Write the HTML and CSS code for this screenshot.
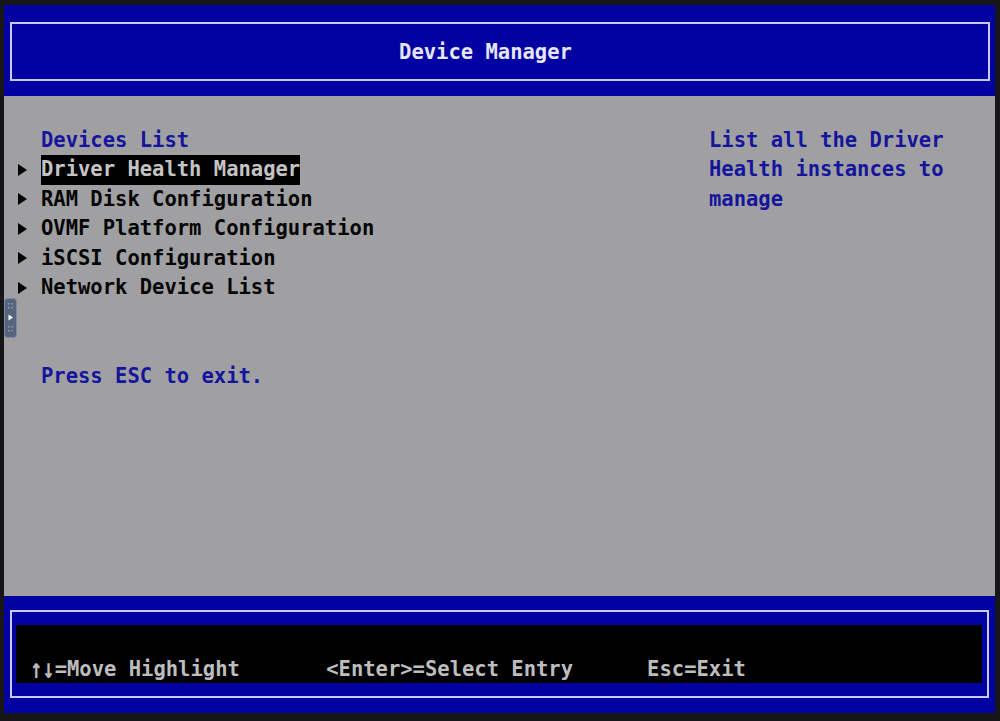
FILE: index.html
```html
<!DOCTYPE html>
<html lang="en">
<head>
    <meta charset="UTF-8">
    <meta name="viewport" content="width=device-width, initial-scale=1.0">
    <title>Device Manager</title>
    <link rel="stylesheet" href="styles.css">
</head>
<body>
    <div class="screen">
        <header class="top">
            <div class="frame">
                <div class="title">Device Manager</div>
            </div>
        </header>

        <main class="form">
            <div class="menu">
                <div class="row label">Devices List</div>
                <div class="row item"><span class="entry selected">Driver Health Manager</span></div>
                <div class="row item"><span class="entry">RAM Disk Configuration</span></div>
                <div class="row item"><span class="entry">OVMF Platform Configuration</span></div>
                <div class="row item"><span class="entry">iSCSI Configuration</span></div>
                <div class="row item"><span class="entry">Network Device List</span></div>
                <div class="row"></div>
                <div class="row"></div>
                <div class="row label">Press ESC to exit.</div>
            </div>
            <div class="help">List all the Driver Health instances to manage</div>
        </main>

        <footer class="bottom">
            <div class="frame">
                <div class="keys">
                    <div class="row"></div>
                    <div class="row hints"><span class="updown">↑↓</span>=Move Highlight       &lt;Enter&gt;=Select Entry      Esc=Exit</div>
                </div>
            </div>
        </footer>
    </div>

    <div class="viewer-tab">
        <svg width="13" height="40" viewBox="0 0 13 40">
            <rect x="0.5" y="0.5" width="12" height="39" rx="3" fill="#56647e" stroke="#7d8aa3"/>
            <g fill="#8e9ab2">
                <rect x="4" y="5" width="1.5" height="1.5"/><rect x="7.5" y="5" width="1.5" height="1.5"/>
                <rect x="4" y="9" width="1.5" height="1.5"/><rect x="7.5" y="9" width="1.5" height="1.5"/>
                <rect x="4" y="28" width="1.5" height="1.5"/><rect x="7.5" y="28" width="1.5" height="1.5"/>
                <rect x="4" y="32" width="1.5" height="1.5"/><rect x="7.5" y="32" width="1.5" height="1.5"/>
            </g>
            <path d="M4.5 16.5 L9 19.5 L4.5 22.5 Z" fill="#ffffff"/>
        </svg>
    </div>
</body>
</html>
```

FILE: styles.css
```css
body {
    margin: 0;
    background-color: #161618;
    font-family: "DejaVu Sans Mono", "Liberation Mono", monospace;
    font-size: 20.5px;
    font-weight: bold;
}

.screen {
    display: flex;
    flex-direction: column;
    height: 708px;
    margin: 5px 5px 8px 4px;
}

.row {
    height: 29.5px;
    line-height: 29.5px;
    white-space: pre;
}

/* header */
.top {
    height: 91px;
    box-sizing: border-box;
    padding: 17px 5px 15px 6px;
    background-color: #0202a2;
}

.frame {
    height: 100%;
    box-sizing: border-box;
    border: 2px solid #c9c9f4;
}

.title {
    display: flex;
    align-items: center;
    justify-content: center;
    height: 100%;
    padding-right: 29px;
    color: #e6e6f6;
}

/* form area */
.form {
    flex: 1;
    display: grid;
    grid-template-columns: 692px 1fr;
    padding: 29.5px 0 0 13px;
    background-color: #a0a0a2;
}

.label {
    padding-left: 24px;
    color: #14149c;
}

.item {
    display: flex;
    align-items: center;
}

.item::before {
    content: "";
    width: 0;
    height: 0;
    margin-left: 1px;
    margin-right: 14px;
    border-left: 9px solid #000;
    border-top: 6px solid transparent;
    border-bottom: 6px solid transparent;
}

.entry {
    color: #050505;
}

.entry.selected {
    background-color: #000;
    color: #c4c4c4;
}

.help {
    max-width: 20ch;
    line-height: 29.5px;
    color: #14149c;
}

/* key hints */
.bottom {
    height: 117px;
    box-sizing: border-box;
    padding: 14px 6px 15px 6px;
    background-color: #0202a2;
}

.bottom .frame {
    padding: 13px 5px 13px 4px;
}

.keys {
    height: 100%;
    box-sizing: border-box;
    padding-left: 14px;
    background-color: #000;
}

.hints {
    color: #bdbdbd;
}

.updown {
    display: inline-block;
    transform: scaleY(1.35);
}

.viewer-tab {
    position: absolute;
    left: 4px;
    top: 298px;
    width: 13px;
    height: 40px;
}
```
